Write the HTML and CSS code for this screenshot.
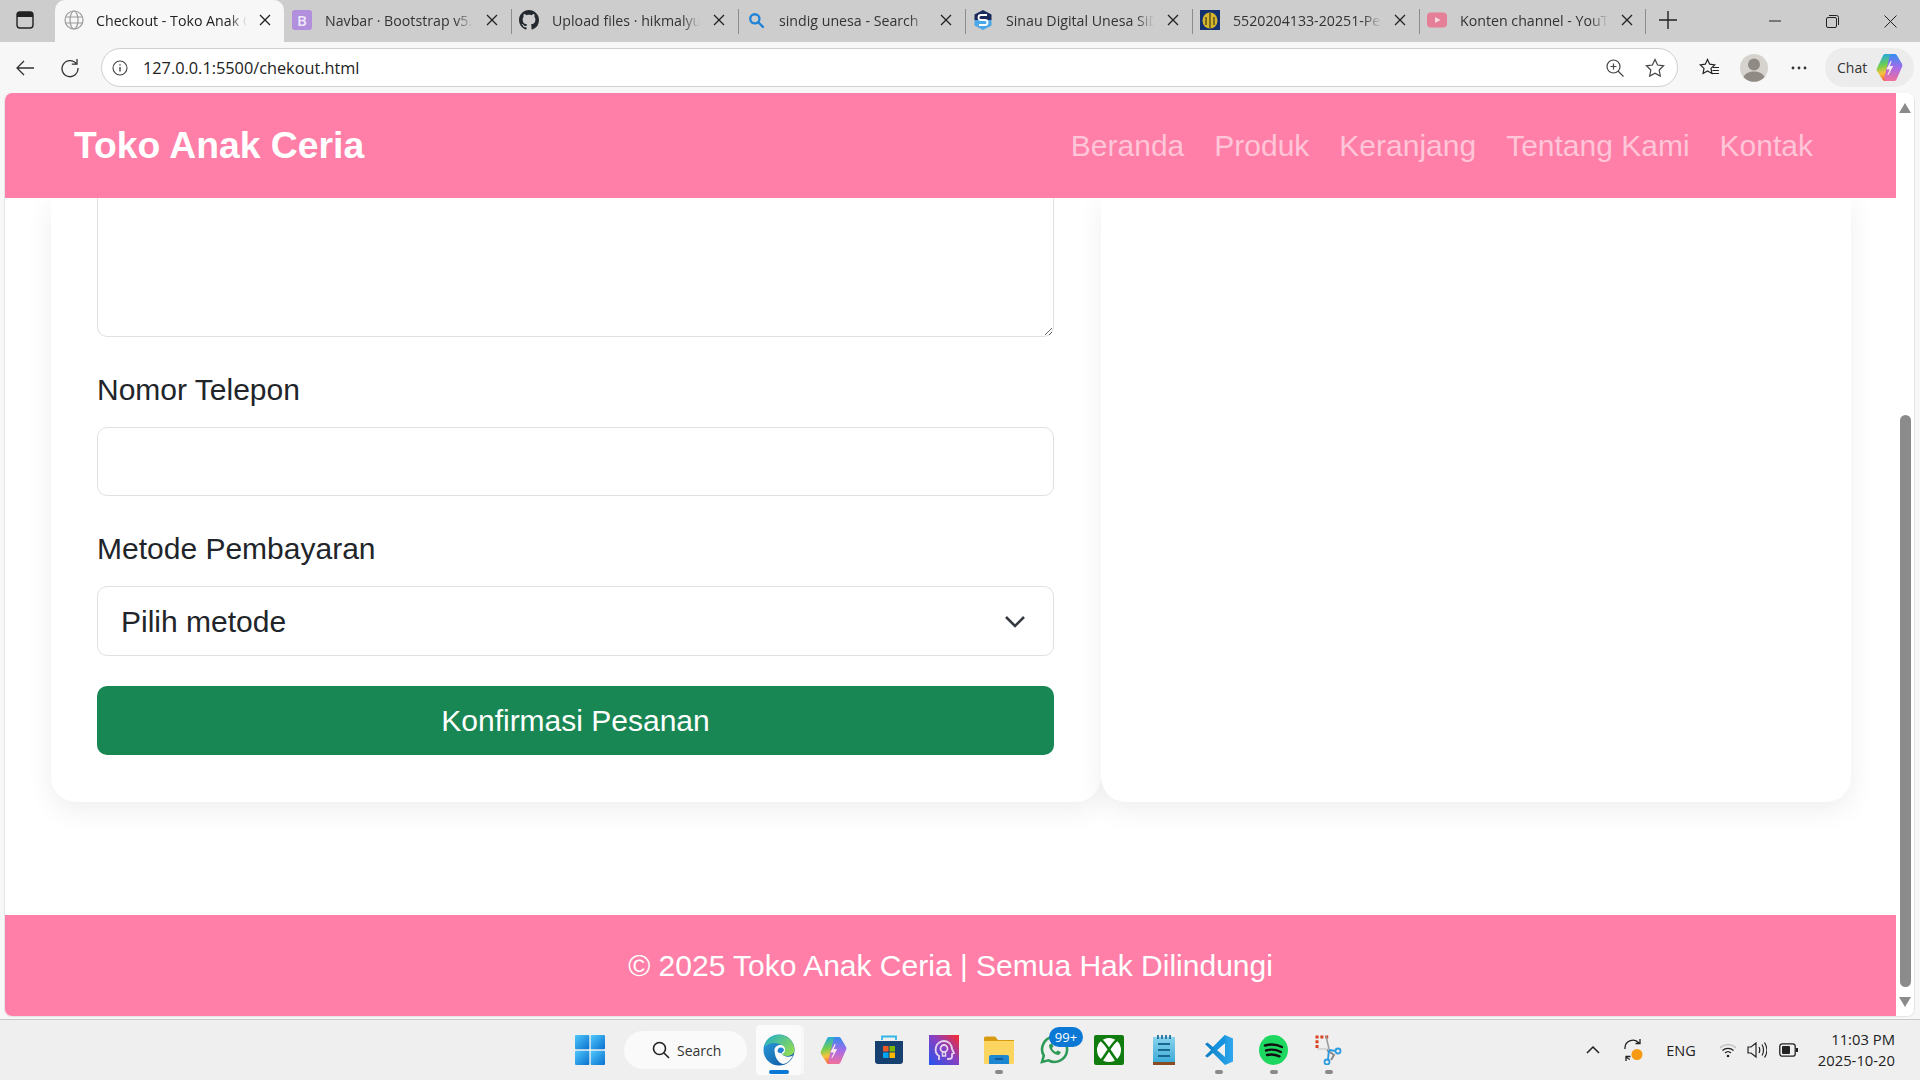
FILE: index.html
```html
<!DOCTYPE html>
<html lang="id">
<head>
<meta charset="utf-8">
<title>Checkout - Toko Anak Ceria</title>
<link rel="stylesheet" href="styles.css">
</head>
<body>
<svg class="defs" width="0" height="0" aria-hidden="true">
  <defs>
    <linearGradient id="gCop" gradientUnits="userSpaceOnUse" x1="8" y1="2" x2="14" y2="28"><stop offset="0" stop-color="#1fa7e8"/><stop offset=".4" stop-color="#6fcf4f"/><stop offset=".68" stop-color="#f9c23c"/><stop offset="1" stop-color="#f0503a"/></linearGradient>
    <linearGradient id="gCop2" gradientUnits="userSpaceOnUse" x1="20" y1="2" x2="18" y2="28"><stop offset="0" stop-color="#2f8df0"/><stop offset=".5" stop-color="#a86be8"/><stop offset="1" stop-color="#f0709a"/></linearGradient>
    <linearGradient id="gWin" x1="0" y1="0" x2="1" y2="1"><stop offset="0" stop-color="#4fc9fb"/><stop offset="1" stop-color="#0a6fd0"/></linearGradient>
    <linearGradient id="gEdge" x1="0" y1="0" x2="1" y2="1"><stop offset="0" stop-color="#2da4e4"/><stop offset="1" stop-color="#0b4f96"/></linearGradient>
    <linearGradient id="gEdge2" x1="0" y1="0" x2="1" y2=".6"><stop offset="0" stop-color="#1fb0c8"/><stop offset="1" stop-color="#8ad85a"/></linearGradient>
    <linearGradient id="gHead" x1="0" y1="1" x2="1" y2="0"><stop offset="0" stop-color="#2255f0"/><stop offset=".55" stop-color="#8a3fc0"/><stop offset="1" stop-color="#fa2a2a"/></linearGradient>
    <linearGradient id="gNote" x1="0" y1="0" x2="0" y2="1"><stop offset="0" stop-color="#8ad3ee"/><stop offset="1" stop-color="#3ba9d6"/></linearGradient>
    <linearGradient id="gCode" x1="0" y1="0" x2="1" y2="0"><stop offset="0" stop-color="#0a7cc4"/><stop offset="1" stop-color="#2ea8ee"/></linearGradient>
    <symbol id="copilot" viewBox="0 0 30 30">
      <path d="M11 4.500h6.500L12.500 25.500h-2L5 17z" fill="url(#gCop)" stroke="url(#gCop)" stroke-width="5" stroke-linejoin="round"/>
      <path d="M17.500 4.500h2.500L25 13l-5.500 12.500h-7z" fill="url(#gCop2)" stroke="url(#gCop2)" stroke-width="5" stroke-linejoin="round"/>
      <path d="M16.500 9l-4 7.500h3.500L13.500 22l4.500-8h-3.300z" fill="#fbeef0" stroke="#fbeef0" stroke-width=".8" stroke-linejoin="round"/>
    </symbol>
  </defs>
</svg>

<header class="tabstrip">
  <button class="side-btn" aria-label="Tab actions">
    <svg width="18" height="18" viewBox="0 0 18 18"><rect x="1" y="1" width="16" height="16" rx="3" fill="none" stroke="#222" stroke-width="1.4"/><path d="M1 4a3 3 0 0 1 3-3h10a3 3 0 0 1 3 3v2H1z" fill="#222"/></svg>
  </button>
  <div class="tab tab-active">
    <svg class="fav" viewBox="0 0 20 20" fill="none" stroke="#9a9a9a" stroke-width="1.2"><circle cx="10" cy="10" r="9"/><ellipse cx="10" cy="10" rx="4" ry="9"/><path d="M1.500 7h17M1.500 13h17"/></svg>
    <span class="tab-title">Checkout - Toko Anak Ceria</span>
    <svg class="tab-x" viewBox="0 0 12 12"><path d="M1 1l10 10M11 1L1 11"/></svg>
  </div>
  <div class="tab">
    <span class="fav fav-b">B</span>
    <span class="tab-title">Navbar · Bootstrap v5.3</span>
    <svg class="tab-x" viewBox="0 0 12 12"><path d="M1 1l10 10M11 1L1 11"/></svg>
  </div>
  <div class="tab tab-sep">
    <svg class="fav" viewBox="0 0 16 16" fill="#24292f"><path d="M8 0C3.58 0 0 3.58 0 8c0 3.54 2.29 6.53 5.47 7.59.4.07.55-.17.55-.38 0-.19-.01-.82-.01-1.49-2.01.37-2.53-.49-2.69-.94-.09-.23-.48-.94-.82-1.13-.28-.15-.68-.52-.01-.53.63-.01 1.08.58 1.23.82.72 1.21 1.87.87 2.33.66.07-.52.28-.87.51-1.07-1.78-.2-3.64-.89-3.64-3.95 0-.87.31-1.59.82-2.15-.08-.2-.36-1.02.08-2.12 0 0 .67-.21 2.2.82.64-.18 1.32-.27 2-.27.68 0 1.36.09 2 .27 1.53-1.04 2.2-.82 2.2-.82.44 1.1.16 1.92.08 2.12.51.56.82 1.27.82 2.15 0 3.07-1.87 3.75-3.65 3.95.29.25.54.73.54 1.48 0 1.07-.01 1.93-.01 2.2 0 .21.15.46.55.38A8.013 8.013 0 0016 8c0-4.42-3.58-8-8-8z"/></svg>
    <span class="tab-title">Upload files · hikmalyu/toko</span>
    <svg class="tab-x" viewBox="0 0 12 12"><path d="M1 1l10 10M11 1L1 11"/></svg>
  </div>
  <div class="tab tab-sep">
    <svg class="fav" viewBox="-3 -3 26 26" fill="none" stroke="#1f83d6" stroke-width="3"><circle cx="8.500" cy="8.500" r="6"/><path d="M13 13l6 6" stroke-linecap="round"/></svg>
    <span class="tab-title">sindig unesa - Search</span>
    <svg class="tab-x" viewBox="0 0 12 12"><path d="M1 1l10 10M11 1L1 11"/></svg>
  </div>
  <div class="tab tab-sep">
    <svg class="fav" viewBox="0 0 20 20"><path d="M10 0l8.500 4.500V10H1.500V4.500z" fill="#1b2a5c"/><path d="M1.500 10h17v5.500L10 20l-8.500-4.500z" fill="#4aa8e8"/><path d="M14 5H8a2 2 0 0 0 0 5h4a2 2 0 0 1 0 5H6" fill="none" stroke="#fff" stroke-width="1.800"/></svg>
    <span class="tab-title">Sinau Digital Unesa SiDIA</span>
    <svg class="tab-x" viewBox="0 0 12 12"><path d="M1 1l10 10M11 1L1 11"/></svg>
  </div>
  <div class="tab tab-sep">
    <svg class="fav" viewBox="0 0 20 20"><rect width="20" height="20" fill="#14306e"/><ellipse cx="10" cy="10.500" rx="7.500" ry="8" fill="#d8b62c"/><path d="M10 3v15M6 7v8M14 7v8" stroke="#3a3a20" stroke-width="1.200"/></svg>
    <span class="tab-title">5520204133-20251-Pemrograman</span>
    <svg class="tab-x" viewBox="0 0 12 12"><path d="M1 1l10 10M11 1L1 11"/></svg>
  </div>
  <div class="tab tab-sep tab-end">
    <svg class="fav" viewBox="0 0 20 20"><rect y="2.500" width="20" height="15" rx="4" fill="#e57f97"/><path d="M8 7l5.500 3L8 13z" fill="#f6dbe1"/></svg>
    <span class="tab-title">Konten channel - YouTube</span>
    <svg class="tab-x" viewBox="0 0 12 12"><path d="M1 1l10 10M11 1L1 11"/></svg>
  </div>
  <div class="new-tab">
    <svg width="18" height="18" viewBox="0 0 18 18"><path d="M9 0v18M0 9h18" stroke="#222" stroke-width="1.400"/></svg>
  </div>
  <div class="win-controls">
    <svg width="12" height="12" viewBox="0 0 12 12"><path d="M0 6h12" stroke="#222"/></svg>
    <svg width="13" height="13" viewBox="0 0 13 13" fill="none" stroke="#222"><rect x=".5" y="2.500" width="10" height="10" rx="1.500"/><path d="M3 .5h7.500a2 2 0 0 1 2 2V10"/></svg>
    <svg width="13" height="13" viewBox="0 0 13 13"><path d="M.5.5l12 12M12.500.5l-12 12" stroke="#222"/></svg>
  </div>
</header>

<div class="toolbar">
  <svg class="tool tool-back" width="18" height="16" viewBox="0 0 18 16" fill="none" stroke="#333" stroke-width="1.300"><path d="M18 8H1M8 1L1 8l7 7"/></svg>
  <svg class="tool tool-reload" width="20" height="20" viewBox="0 0 20 20" fill="none" stroke="#333" stroke-width="1.300"><path d="M16.500 6A8 8 0 1 0 18 10"/><path d="M17 1v5.200h-5.200"/></svg>
  <div class="omnibox">
    <svg width="16" height="16" viewBox="0 0 16 16" fill="none" stroke="#444" stroke-width="1.100"><circle cx="8" cy="8" r="7"/><path d="M8 7v4.500M8 4.200v1.400" stroke-width="1.400"/></svg>
    <span class="url">127.0.0.1:5500/chekout.html</span>
    <svg class="omni-zoom" width="18" height="18" viewBox="0 0 18 18" fill="none" stroke="#444" stroke-width="1.200"><circle cx="7.500" cy="7.500" r="6.500"/><path d="M12 12l5.500 5.500M7.500 4.500v6M4.500 7.500h6"/></svg>
    <svg class="omni-star" width="20" height="20" viewBox="0 0 20 20" fill="none" stroke="#444" stroke-width="1.200"><path d="M10 1.500l2.600 5.500 6 .8-4.400 4.200 1.100 6-5.300-2.900-5.300 2.900 1.100-6L1.400 7.800l6-.8z"/></svg>
  </div>
  <svg class="tool tool-fav" width="20" height="20" viewBox="0 0 20 20" fill="none" stroke="#222" stroke-width="1.200"><path d="M8.500 1.500l2.200 4.700 5 .7-3.700 3.500.9 5-4.400-2.500-4.400 2.500.9-5L1.300 6.900l5-.7z"/><path d="M14 9.500h6M13.500 12.500h6.500M12.500 15.500h7.500"/></svg>
  <div class="avatar">
    <svg width="28" height="28" viewBox="0 0 28 28"><circle cx="14" cy="14" r="14" fill="#d6d3ce"/><circle cx="14" cy="10.500" r="6" fill="#8f8a84"/><path d="M3.500 23c2-4 6-5.500 10.500-5.500S22.500 19 24.500 23a14 14 0 0 1-21 0z" fill="#8f8a84"/></svg>
  </div>
  <svg class="tool tool-more" width="16" height="4" viewBox="0 0 16 4" fill="#333"><circle cx="2" cy="2" r="1.400"/><circle cx="8" cy="2" r="1.400"/><circle cx="14" cy="2" r="1.400"/></svg>
  <div class="chat">
    <span>Chat</span>
    <svg width="31" height="31"><use href="#copilot"/></svg>
  </div>
</div>

<div class="viewport">
  <div class="window">
    <div class="page">
      <nav class="navbar">
        <a class="brand" href="#">Toko Anak Ceria</a>
        <ul class="nav-links">
          <li><a href="#">Beranda</a></li>
          <li><a href="#">Produk</a></li>
          <li><a href="#">Keranjang</a></li>
          <li><a href="#">Tentang Kami</a></li>
          <li><a href="#">Kontak</a></li>
        </ul>
      </nav>
      <main class="checkout">
        <form class="card card-form">
          <textarea class="control control-clipped" aria-label="Alamat"></textarea>
          <div class="field">
            <label class="field-label" for="phone">Nomor Telepon</label>
            <input class="control control-line" id="phone" type="text">
          </div>
          <div class="field">
            <label class="field-label" for="pay">Metode Pembayaran</label>
            <div class="select-wrap">
              <select class="control control-select" id="pay"><option>Pilih metode</option></select>
              <svg class="chevron" width="20" height="13" viewBox="0 0 20 13" fill="none" stroke="#343a40" stroke-width="2.500"><path d="M1 2l9 9 9-9"/></svg>
            </div>
          </div>
          <button class="submit" type="button">Konfirmasi Pesanan</button>
        </form>
        <aside class="card card-side"></aside>
      </main>
      <footer class="footer">© 2025 Toko Anak Ceria | Semua Hak Dilindungi</footer>
    </div>
    <div class="scrollbar">
      <span class="arrow arrow-up"></span>
      <span class="thumb"></span>
      <span class="arrow arrow-down"></span>
    </div>
  </div>
</div>

<footer class="taskbar">
  <div class="task-icons">
    <div class="tb-slot">
      <svg width="30" height="30" viewBox="0 0 30 30" fill="url(#gWin)"><rect width="14.300" height="14.300" rx="1"/><rect x="15.700" width="14.300" height="14.300" rx="1"/><rect y="15.700" width="14.300" height="14.300" rx="1"/><rect x="15.700" y="15.700" width="14.300" height="14.300" rx="1"/></svg>
    </div>
    <div class="search-pill">
      <svg width="18" height="18" viewBox="0 0 18 18" fill="none" stroke="#222" stroke-width="1.600"><circle cx="7.500" cy="7.500" r="6"/><path d="M12 12l5 5"/></svg>
      <span>Search</span>
    </div>
    <div class="tb-slot tb-active">
      <svg width="32" height="32" viewBox="0 0 32 32"><circle cx="16" cy="16" r="15.500" fill="url(#gEdge)"/><path d="M3.500 7A15.500 15.500 0 0 1 31.500 16c0 3.500-3 6-7.500 6-3 0-5-1-5.500-2.500 3-1.500 3.500-5 1-7.500-4-4-13-4-17 .5-1-1.500 0-3.500 1-5z" fill="url(#gEdge2)"/><path d="M11.500 16c0-3 3-5.500 6.500-5 3.500.5 5 4 3.500 7-.5 1-1.500 1.500-2.500 2 2 3 7 3.500 11 1.500-2 5-6.500 8-10 8.500-6-1.500-8.500-8.500-8.500-14z" fill="#fbfbfb"/><path d="M14.500 17c0-2 1.500-3.500 3.500-3.500s3 1.500 3 3c-1 1-2 2-2.500 3-2-.5-4-1-4-2.500z" fill="#1f7fd0"/></svg>
      <i class="tb-open"></i>
    </div>
    <div class="tb-slot">
      <svg width="31" height="31"><use href="#copilot"/></svg>
    </div>
    <div class="tb-slot">
      <svg width="30" height="30" viewBox="0 0 30 30"><path d="M8 5V1.500h14V5" fill="none" stroke="#33b5e8" stroke-width="1.800"/><path d="M1 6h28v20a3 3 0 0 1-3 3H4a3 3 0 0 1-3-3z" fill="#16406f"/><rect x="9" y="11" width="5.500" height="5.500" fill="#ef5a24"/><rect x="15.500" y="11" width="5.500" height="5.500" fill="#7fba00"/><rect x="9" y="17.500" width="5.500" height="5.500" fill="#00a4ef"/><rect x="15.500" y="17.500" width="5.500" height="5.500" fill="#ffb900"/></svg>
    </div>
    <div class="tb-slot">
      <svg width="30" height="30" viewBox="0 0 30 30"><rect width="30" height="30" fill="url(#gHead)"/><path d="M10 25v-4c-3-2-4-5-3-9 1-4 5-6 8-6 5 0 8 4 8 8l2 4-2 1v3c0 1-1 2-4 2v1" fill="none" stroke="#e6d6ee" stroke-width="1.800"/><circle cx="15" cy="13.500" r="3.500" fill="none" stroke="#e6d6ee" stroke-width="1.800"/><path d="M13.500 17v4h3v-4" fill="none" stroke="#e6d6ee" stroke-width="1.500"/></svg>
    </div>
    <div class="tb-slot">
      <svg width="30" height="30" viewBox="0 0 30 30"><path d="M0 3a1.500 1.500 0 0 1 1.500-1.500H11l3 3.500h16v4H0z" fill="#d79b12"/><path d="M0 6h30v22a1 1 0 0 1-1 1H1a1 1 0 0 1-1-1z" fill="#fcd460"/><path d="M5 22a2 2 0 0 1 2-2h16a2 2 0 0 1 2 2v7H5z" fill="#1c86d0"/><path d="M11 24h8" stroke="#0f4f86" stroke-width="1.500"/></svg>
      <i class="tb-dot"></i>
    </div>
    <div class="tb-slot">
      <svg width="30" height="30" viewBox="0 0 30 30" fill="none" stroke="#2e9a58" stroke-width="2.600"><path d="M3 27l1.800-6.300A12.500 12.500 0 1 1 9.500 25.300z"/><path d="M10 10c0 5 5 10 10 10l2-3-3.500-1.500-1.500 1.500c-2-.8-3.300-2.100-4-4l1.500-1.500L13 8z" fill="#2e9a58" stroke="none"/></svg>
      <span class="badge">99+</span>
    </div>
    <div class="tb-slot">
      <svg width="30" height="30" viewBox="0 0 30 30"><rect width="30" height="30" rx="2" fill="#107c10"/><circle cx="15" cy="15" r="12" fill="#fff"/><path d="M7 5c5 3 11 15 16 21M23 5C18 8 12 20 7 26" fill="none" stroke="#107c10" stroke-width="2.600"/></svg>
    </div>
    <div class="tb-slot">
      <svg width="24" height="30" viewBox="0 0 24 30"><rect x="1" y="2" width="22" height="26" fill="url(#gNote)"/><rect x="1" y="27" width="22" height="3" fill="#8a4a22"/><path d="M6 0v4M10 0v4M14 0v4M18 0v4" stroke="#1f6f9c" stroke-width="1.800"/><path d="M6 9h12M6 15h12M6 21h12" stroke="#17688f" stroke-width="2"/></svg>
    </div>
    <div class="tb-slot">
      <svg width="30" height="30" viewBox="0 0 30 30"><path d="M21 0l8 3.500v23L21 30 9 18l-5.500 4.500L1 21l6-6-6-6 2.500-1.500L9 12z" fill="url(#gCode)"/><path d="M21 8l-8 7 8 7z" fill="#f0f0f0"/><path d="M21 0v8l-8 7-4-3z" fill="#1593e0"/></svg>
      <i class="tb-dot"></i>
    </div>
    <div class="tb-slot">
      <svg width="29" height="30" viewBox="0 0 29 30"><ellipse cx="14.500" cy="15" rx="14.500" ry="15" fill="#1ed760"/><path d="M6 10.500c6-1.800 12-1.200 17 1.500M7 15.500c5-1.500 10-1 15 1.500M8 20c4-1 8-.8 12.500 1.300" fill="none" stroke="#111" stroke-width="2.400" stroke-linecap="round"/></svg>
      <i class="tb-dot"></i>
    </div>
    <div class="tb-slot">
      <svg width="30" height="30" viewBox="0 0 30 30" fill="none"><path d="M3 13V2h12" stroke="#d8401f" stroke-width="3" stroke-dasharray="3 1.800"/><path d="M3 14h11v12" stroke="#cfcfcf" stroke-width="1.500"/><path d="M13 15l7 5-3 5" stroke="#8a8a8a" stroke-width="2"/><path d="M12 1l3 13" stroke="#9a9a9a" stroke-width="1.500"/><circle cx="24" cy="16" r="2.500" stroke="#2d9be0" stroke-width="1.800"/><circle cx="13" cy="27" r="2.500" stroke="#2d9be0" stroke-width="1.800"/><path d="M15 15l7 1M15 15l-1 10" stroke="#2d9be0" stroke-width="1.800"/></svg>
      <i class="tb-dot"></i>
    </div>
  </div>
  <div class="tray">
    <svg class="tray-chevron" width="14" height="8" viewBox="0 0 14 8" fill="none" stroke="#222" stroke-width="1.500"><path d="M1 7l6-6 6 6"/></svg>
    <svg class="tray-sync" width="22" height="24" viewBox="0 0 22 24" fill="none" stroke="#222" stroke-width="1.300"><path d="M2 11a8 8 0 0 1 14-6M17 1v4.500h-4.500M3 23v-4.500h4.500M3 18.500a8 8 0 0 0 4 3"/><circle cx="14" cy="16.500" r="5.500" fill="#f59a12" stroke="none"/></svg>
    <span class="tray-lang">ENG</span>
    <svg class="tray-wifi" width="18" height="15" viewBox="0 0 18 15" fill="none" stroke="#222" stroke-width="1.300"><path d="M1 5a11 11 0 0 1 16 0" stroke="#bbb"/><path d="M3.500 7.500a8 8 0 0 1 11 0M6 10a4.500 4.500 0 0 1 6 0"/><circle cx="9" cy="13" r="1.300" fill="#222" stroke="none"/></svg>
    <svg class="tray-vol" width="20" height="18" viewBox="0 0 20 18" fill="none" stroke="#222" stroke-width="1.200"><path d="M1 6v6h3l5 4V2L4 6zM12 6c1 2 1 4 0 6M15 3.500c2 3 2 8 0 11M17.500 1.500c3 4.500 3 10.500 0 15"/></svg>
    <svg class="tray-bat" width="20" height="14" viewBox="0 0 20 14" fill="none"><rect x=".8" y=".8" width="15.400" height="12.400" rx="2.500" stroke="#222" stroke-width="1.300"/><rect x="3" y="3" width="8" height="8" rx="1" fill="#222"/><path d="M18 5v4" stroke="#222" stroke-width="2"/></svg>
    <div class="clock">
      <span>11:03 PM</span>
      <span>2025-10-20</span>
    </div>
  </div>
</footer>
</body>
</html>
```

FILE: styles.css
```css
* { box-sizing: border-box; }

html, body { margin: 0; padding: 0; }

body {
  width: 1920px;
  height: 1080px;
  overflow: hidden;
  display: flex;
  flex-direction: column;
  background: #f7f7f7;
  font-family: "Liberation Sans", Arial, sans-serif;
  color: #212529;
}

.defs { position: absolute; }

/* tab strip */
.tabstrip {
  height: 42px;
  flex: none;
  display: flex;
  align-items: stretch;
  background: #cdcdcd;
  font-family: "Open Sans", "Noto Sans", sans-serif;
  font-size: 14.2px;
  color: #333;
}

.side-btn {
  width: 55px;
  flex: none;
  padding: 0 0 2px 16px;
  border: 0;
  background: none;
  display: flex;
  align-items: center;
}

.tab {
  width: 227px;
  flex: none;
  position: relative;
  display: flex;
  align-items: center;
  padding: 0 13px 2px 8px;
  gap: 13px;
}

.tab-active {
  width: 229px;
  padding-left: 9px;
  gap: 12px;
  background: #f7f7f7;
  border-radius: 10px 10px 0 0;
  color: #222;
}

.tab-sep::before,
.tab-end::after {
  content: "";
  position: absolute;
  left: 0;
  top: 9px;
  width: 1px;
  height: 25px;
  background: #8c8c8c;
}

.tab-end::after { left: auto; right: 0; }

.fav {
  width: 20px;
  height: 20px;
  flex: none;
}

.fav-b {
  background: #b18fdc;
  color: #efe6fa;
  border-radius: 3px;
  display: flex;
  align-items: center;
  justify-content: center;
  font-size: 15px;
  font-weight: 600;
}

.tab-title {
  flex: 1;
  min-width: 0;
  white-space: nowrap;
  overflow: hidden;
  -webkit-mask-image: linear-gradient(90deg, #000 88%, transparent);
  mask-image: linear-gradient(90deg, #000 88%, transparent);
}

.tab-x {
  width: 12px;
  height: 12px;
  flex: none;
  fill: none;
  stroke: #222;
  stroke-width: 1.3;
}

.new-tab {
  width: 44px;
  flex: none;
  padding-bottom: 2px;
  display: flex;
  align-items: center;
  justify-content: center;
}

.win-controls {
  margin-left: auto;
  display: flex;
  align-items: center;
  gap: 45px;
  padding-right: 23px;
}

/* toolbar */
.toolbar {
  height: 51px;
  flex: none;
  display: flex;
  align-items: center;
  background: #f7f7f7;
}

.tool { flex: none; }
.tool-back { margin-left: 16px; }
.tool-reload { margin-left: 26px; }

.omnibox {
  width: 1577px;
  height: 39px;
  flex: none;
  margin-left: 21px;
  padding: 0 12px 0 10px;
  display: flex;
  align-items: center;
  background: #fff;
  border: 1px solid #cfcfcf;
  border-radius: 20px;
}

.url {
  margin-left: 15px;
  font-family: "Open Sans", "Noto Sans", sans-serif;
  font-size: 16.3px;
  color: #222;
}

.omni-zoom { margin-left: auto; }
.omni-star { margin-left: 21px; }

.tool-fav { margin-left: 21px; }

.avatar {
  margin-left: 21px;
  width: 28px;
  height: 28px;
  flex: none;
}

.tool-more { margin-left: 23px; }

.chat {
  width: 89px;
  height: 39px;
  flex: none;
  margin-left: 18px;
  padding: 0 9px 0 12px;
  display: flex;
  align-items: center;
  justify-content: space-between;
  background: #ececec;
  border-radius: 20px;
  font-family: "Open Sans", "Noto Sans", sans-serif;
  font-size: 14px;
  color: #333;
}

/* page window */
.viewport {
  height: 924px;
  flex: none;
  padding: 0 5px 0 4px;
}

.window {
  height: 100%;
  display: flex;
  background: #fff;
  border: 1px solid #e4e4e4;
  border-top: 0;
  border-radius: 8px;
  overflow: hidden;
}

.page {
  width: 1891px;
  flex: none;
  display: flex;
  flex-direction: column;
}

.navbar {
  height: 105px;
  flex: none;
  position: relative;
  z-index: 2;
  display: flex;
  align-items: center;
  justify-content: space-between;
  padding: 0 83px 0 69px;
  background: #ff7fa8;
}

.brand {
  font-size: 37.3px;
  font-weight: 700;
  color: #fff;
  text-decoration: none;
}

.nav-links {
  display: flex;
  gap: 30px;
  margin: 0;
  padding: 0;
  list-style: none;
  font-size: 30px;
}

.nav-links a {
  color: #ffc5d8;
  text-decoration: none;
}

.checkout {
  flex: 1;
  min-height: 0;
  display: grid;
  grid-template-columns: 7fr 5fr;
  padding: 0 45px 113px 46px;
  overflow: hidden;
}

.card {
  background: #fff;
  border-radius: 0 0 25px 25px;
  box-shadow: 0 8px 28px rgba(0, 0, 0, .07);
}

.card-form {
  display: flex;
  flex-direction: column;
  padding: 0 47px 47px 46px;
}

.control {
  display: block;
  width: 100%;
  background: #fff;
  border: 1px solid #dee2e6;
  border-radius: 10px;
  font-family: inherit;
  font-size: 30px;
  color: #212529;
}

.control-clipped {
  height: 139px;
  flex: none;
  border-top: 0;
  border-radius: 0 0 10px 10px;
  outline: 0;
}

.control-line { height: 69px; }

.control-select {
  height: 70px;
  padding: 0 60px 0 23px;
  appearance: none;
  -webkit-appearance: none;
}

.select-wrap { position: relative; }

.chevron {
  position: absolute;
  right: 29px;
  top: 29px;
  pointer-events: none;
}

.field {
  margin-top: 31px;
  flex: none;
}

.field-label {
  display: block;
  height: 44px;
  margin-bottom: 15px;
  font-size: 30px;
  line-height: 44px;
}

.submit {
  height: 69px;
  flex: none;
  margin-top: 30px;
  border: 0;
  border-radius: 10px;
  background: #198754;
  color: #fff;
  font-family: inherit;
  font-size: 30px;
}

.footer {
  height: 101px;
  flex: none;
  display: flex;
  align-items: center;
  justify-content: center;
  background: #ff7fa8;
  color: #fff;
  font-size: 30px;
}

/* scrollbar */
.scrollbar {
  width: 18px;
  flex: none;
  display: flex;
  flex-direction: column;
  align-items: center;
  padding-top: 10px;
  background: #fff;
}

.arrow {
  width: 0;
  height: 0;
  border-left: 6.5px solid transparent;
  border-right: 6.5px solid transparent;
}

.arrow-up { border-bottom: 10px solid #8b8b8b; }
.arrow-down { margin-top: 10px; border-top: 10px solid #8b8b8b; }

.thumb {
  width: 11px;
  height: 572px;
  margin-top: 302px;
  background: #8b8b8b;
  border-radius: 5.5px;
}

/* taskbar */
.taskbar {
  height: 61px;
  flex: none;
  margin-top: 2px;
  display: flex;
  align-items: center;
  justify-content: space-between;
  padding: 0 25px 0 563px;
  background: #f0efef;
  border-top: 1px solid #c9c9c9;
  font-family: "Open Sans", "Noto Sans", sans-serif;
}

.task-icons {
  display: flex;
  align-items: center;
}

.tb-slot {
  width: 55px;
  height: 50px;
  flex: none;
  position: relative;
  display: flex;
  align-items: center;
  justify-content: center;
}

.tb-slot:first-child { width: 54px; }

.tb-active {
  width: 45px;
  margin: 0 5px;
  background: #fbfbfb;
  border-radius: 4px;
  box-shadow: 4px 0 0 -1px #f7f7f7;
}

.tb-open {
  position: absolute;
  left: 50%;
  bottom: 1px;
  width: 20px;
  height: 4px;
  margin-left: -10px;
  background: #0a78d4;
  border-radius: 2px;
}

.tb-dot {
  position: absolute;
  left: 50%;
  bottom: 1px;
  width: 8px;
  height: 4px;
  margin-left: -4px;
  background: #8a8a8a;
  border-radius: 2px;
}

.badge {
  position: absolute;
  left: 23px;
  top: 2px;
  width: 34px;
  height: 20px;
  display: flex;
  align-items: center;
  justify-content: center;
  background: #0a78d4;
  border-radius: 10px;
  color: #fff;
  font-size: 13px;
}

.search-pill {
  width: 123px;
  height: 38px;
  flex: none;
  margin: 0 4px 0 7px;
  padding-left: 28px;
  display: flex;
  align-items: center;
  gap: 7px;
  background: #fafafa;
  border-radius: 19px;
  font-size: 14px;
  color: #333;
}

.tray {
  display: flex;
  align-items: center;
  color: #222;
}

.tray-lang {
  margin-left: 21px;
  font-size: 14.5px;
}

.tray-sync { margin-left: 23px; }
.tray-wifi { margin-left: 23px; }
.tray-vol { margin-left: 10px; }
.tray-bat { margin-left: 12px; }

.clock {
  margin-left: 19px;
  display: flex;
  flex-direction: column;
  align-items: flex-end;
  gap: 2px;
  font-size: 14.8px;
  line-height: 19px;
}
```
